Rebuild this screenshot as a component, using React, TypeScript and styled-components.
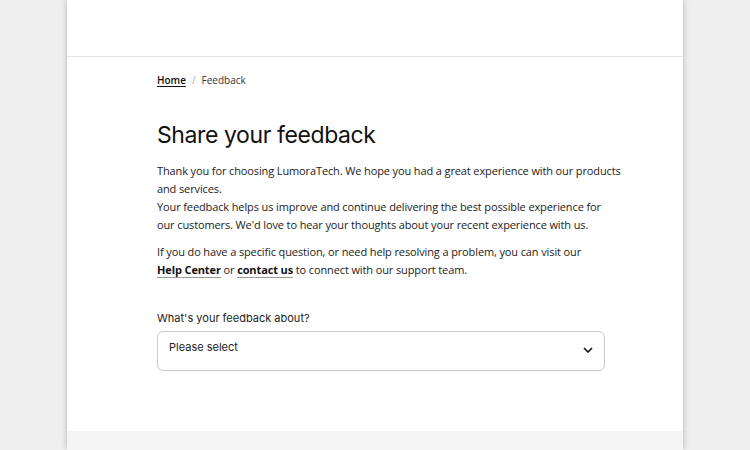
import styled, { createGlobalStyle } from 'styled-components';

const GlobalStyle = createGlobalStyle`
  html, body {
    margin: 0;
    padding: 0;
    background: #efefef;
  }

  body {
    font-family: 'Open Sans', 'Liberation Sans', sans-serif;
    color: #1a1a1a;
  }
`;

const Page = styled.div`
  width: 616px;
  min-height: 450px;
  margin: 0 auto;
  background: #fff;
  box-shadow: 0 0 6px rgba(0, 0, 0, 0.25);
  display: flex;
  flex-direction: column;
`;

const Header = styled.header`
  height: 56px;
  border-bottom: 1px solid #e4e4e4;
`;

const Main = styled.main`
  padding: 15px 40px 60px 90px;
`;

const Breadcrumb = styled.nav`
  display: flex;
  align-items: center;
  gap: 6px;
  font-size: 10px;
  line-height: 16px;
  color: #333;

  & a {
    color: #111;
    font-weight: 600;
    text-decoration: underline;
    text-underline-offset: 2px;
  }

  & .sep {
    color: #aaa;
  }
`;

const Title = styled.h1`
  margin: 31px 0 11px;
  font-family: 'Inter', 'Liberation Sans', sans-serif;
  font-size: 23px;
  font-weight: 400;
  letter-spacing: -0.4px;
  line-height: 32px;
  color: #111;
`;

// line breaks follow the layout of the original page
const Paragraph = styled.p<{ $gap?: number }>`
  margin: ${p => p.$gap ?? 0}px 0 0;
  font-size: 11px;
  letter-spacing: -0.12px;
  line-height: 18px;
  color: #222;

  & a {
    color: #111;
    font-weight: 700;
    text-decoration: none;
    border-bottom: 1px solid #999;
  }
`;

const Field = styled.div`
  margin-top: 31px;
  width: 448px;
  display: flex;
  flex-direction: column;
  gap: 5px;
`;

const Label = styled.label`
  font-family: 'Inter', 'Liberation Sans', sans-serif;
  font-size: 11px;
  line-height: 16px;
  color: #222;
`;

const Select = styled.div`
  box-sizing: border-box;
  height: 40px;
  border: 1px solid #c9c9c9;
  border-radius: 6px;
  padding: 7px 11px 0;
  display: flex;
  justify-content: space-between;
  align-items: flex-start;
  font-family: 'Inter', 'Liberation Sans', sans-serif;
  font-size: 11px;
  line-height: 16px;
  color: #222;

  & svg {
    margin-top: 8px;
  }
`;

const Footer = styled.footer`
  flex: 1;
  background: #f5f5f5;
`;

const Chevron = () => (
  <svg width="10" height="6" viewBox="0 0 10 6" fill="none">
    <path d="M1 1l4 4 4-4" stroke="#111" strokeWidth="1.6" />
  </svg>
);

const App: React.FC = () => {
  return (
    <>
      <GlobalStyle />
      <Page>
        <Header />
        <Main>
          <Breadcrumb>
            <a href="#">Home</a>
            <span className="sep">/</span>
            <span>Feedback</span>
          </Breadcrumb>
          <Title>Share your feedback</Title>
          <Paragraph>
            Thank you for choosing LumoraTech. We hope you had a great experience with our products
            <br />
            and services.
            <br />
            Your feedback helps us improve and continue delivering the best possible experience for
            <br />
            our customers. We'd love to hear your thoughts about your recent experience with us.
          </Paragraph>
          <Paragraph $gap={9}>
            If you do have a specific question, or need help resolving a problem, you can visit our
            <br />
            <a href="#">Help Center</a> or <a href="#">contact us</a> to connect with our support
            team.
          </Paragraph>
          <Field>
            <Label>What's your feedback about?</Label>
            <Select>
              <span>Please select</span>
              <Chevron />
            </Select>
          </Field>
        </Main>
        <Footer />
      </Page>
    </>
  );
};

export default App;
